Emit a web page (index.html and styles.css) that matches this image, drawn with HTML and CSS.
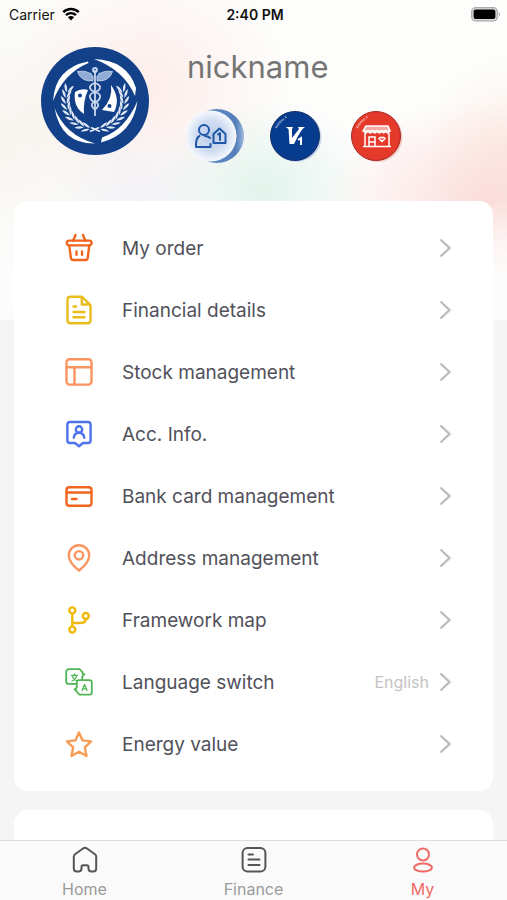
FILE: index.html
```html
<!DOCTYPE html>
<html lang="en">
<head>
  <meta charset="UTF-8">
  <meta name="viewport" content="width=device-width, initial-scale=1.0">
  <title>My</title>
  <link rel="stylesheet" href="styles.css">
</head>
<body>
  <div class="screen">
    <div class="content">
      <div class="status-bar">
        <div class="carrier">
          <span>Carrier</span>
          <svg class="wifi" viewBox="0 0 18 14">
            <path d="M1.2 5.2a11 11 0 0 1 15.6 0M4 8.2a7 7 0 0 1 10 0" fill="none" stroke="#000" stroke-width="2.4"/>
            <path d="M5.9 10.2a4.4 4.4 0 0 1 6.2 0L9 13.4z"/>
          </svg>
        </div>
        <span class="time">2:40 PM</span>
        <div class="power">
          <svg class="battery" viewBox="0 0 30 15">
            <rect x="0.7" y="0.7" width="25.6" height="13.2" rx="4" fill="#ddd" stroke="#aaa" stroke-width="1.3"/>
            <rect x="2.6" y="2.6" width="21.8" height="9.4" rx="2"/>
            <path d="M27.8 4.8q2.4 2.5 0 5z" fill="#aaa"/>
          </svg>
        </div>
      </div>

      <header class="profile">
        <svg class="avatar" viewBox="0 0 108 108">
          <defs>
            <g id="leaf">
              <path d="M55 81.500q-3-4-8.500-4.200q2.500 4.200 8.500 4.200zM55 82.500q-3 4-8.500 4.200q2.500-4.200 8.500-4.200z"/>
            </g>
            <g id="branch">
              <use href="#leaf" transform="rotate(12 54 53)"/>
              <use href="#leaf" transform="rotate(24 54 53)"/>
              <use href="#leaf" transform="rotate(36 54 53)"/>
              <use href="#leaf" transform="rotate(48 54 53)"/>
              <use href="#leaf" transform="rotate(60 54 53)"/>
              <use href="#leaf" transform="rotate(72 54 53)"/>
              <use href="#leaf" transform="rotate(84 54 53)"/>
              <use href="#leaf" transform="rotate(96 54 53)"/>
              <use href="#leaf" transform="rotate(107 54 53)"/>
              <path d="M59 84.500l-9-4" stroke="#e6edf8" stroke-width="1.6"/>
            </g>
          </defs>
          <circle cx="54" cy="54" r="54" fill="#134189"/>
          <g fill="#fff">
            <path d="M12 54Q14 21 47 14.500L47.500 16Q23 26 12 54z"/>
            <path d="M53 12Q86 13 95 41L94 49Q83 23 53 12z"/>
            <path d="M96.500 54Q92 87 60 95.500L61 90.500Q84 83 96.500 54z"/>
            <path d="M13.500 61Q24 88 54 96.500Q20 97 13.500 61z"/>
            <path d="M34 45Q40 41 47 43Q42 54 43 67Q32 60 34 45z"/>
            <path d="M70 38Q80 52 73 65L61 63Q72 52 70 38z"/>
          </g>
          <circle cx="39" cy="48.500" r="2" fill="#134189"/>
          <circle cx="68.500" cy="59" r="2" fill="#134189"/>
          <g fill="#dfe8f5">
            <use href="#branch"/>
            <use href="#branch" transform="translate(108 0) scale(-1 1)"/>
          </g>
          <g fill="none" stroke="#c9d8ee" stroke-width="1.800">
            <path d="M54 23V69"/>
            <circle cx="54" cy="23" r="2"/>
            <path d="M50 26q-4 5 2 8M58 26q4 5-2 8"/>
            <path d="M54 36q-6 2-5 5t6 4.500t4 5t-5 4.500t-3 4t4 4M54 36q6 2 5 5t-6 4.500t-4 5t5 4.500t3 4t-4 4"/>
          </g>
          <g fill="#8fabd6" stroke="#b9cbe6" stroke-width="1">
            <path d="M52 29Q47 23 36.500 24.500Q38 30 43 32.500Q48 35 52 33z"/>
            <path d="M56 29Q61 23 71.500 24.500Q70 30 65 32.500Q60 35 56 33z"/>
          </g>
        </svg>
        <div class="profile-info">
          <h1 class="nickname">nickname</h1>
          <div class="badges">
            <svg class="badge" viewBox="0 0 60 60">
              <defs>
                <radialGradient id="disc">
                  <stop offset="0" stop-color="#bccdea"/>
                  <stop offset="0.6" stop-color="#cfdcf1"/>
                  <stop offset="1" stop-color="#f6f9fd"/>
                </radialGradient>
                <linearGradient id="rim" x1="0" x2="1">
                  <stop offset="0.3" stop-color="#5f8cc6"/>
                  <stop offset="0.85" stop-color="#557fb9"/>
                  <stop offset="1" stop-color="#9db9de"/>
                </linearGradient>
              </defs>
              <circle cx="30" cy="30" r="27" fill="url(#rim)"/>
              <circle cx="24" cy="30" r="25.500" fill="url(#disc)"/>
              <g fill="none" stroke="#2058a8" stroke-width="2" stroke-linejoin="round" stroke-linecap="round">
                <circle cx="17" cy="24" r="5"/>
                <path d="M12.500 30Q8.500 32 9 41H23.500v-3M18 30q3 0 5 2"/>
                <path d="M26.500 28l6-5.500l6 5.500v9h-12zM31 28.500l2-1.500v7"/>
              </g>
            </svg>
            <svg class="badge" viewBox="0 0 60 60">
              <circle cx="28.500" cy="31" r="25" fill="#c7d3ea"/>
              <circle cx="27" cy="30" r="24.500" fill="#073b8e" stroke="#162f68"/>
              <path d="M8 22q3-6 8-9M17 11.500l1.500-.500" fill="none" stroke="#7d9ccb" stroke-width="2.200" stroke-dasharray="1.500 0.600"/>
              <path d="M17.500 21h7.500l-1 2v9l7-9-1-2h7q-4 2-11 17h-4.500l-1-15z" fill="#fff"/>
              <path d="M30 34l3-2v7" fill="none" stroke="#fff" stroke-width="2"/>
            </svg>
            <svg class="badge" viewBox="0 0 60 60">
              <circle cx="28.500" cy="31" r="25" fill="#f4cbc7"/>
              <circle cx="27" cy="30" r="24.500" fill="#e53a29" stroke="#9f2b26"/>
              <path d="M8 22q3-6 8-9M17 11.500l1.500-.500" fill="none" stroke="#f5a198" stroke-width="2.200" stroke-dasharray="1.500 0.600"/>
              <path d="M17 20h22l2 5q-2 3-4 0q-2 3-4.500 0q-2 3-4.500 0q-2 3-4.500 0q-2 3-4.500 0q-2 3-4.500 0z" fill="#f5aaa2"/>
              <g fill="none" stroke="#fff" stroke-width="1.500">
                <path d="M17 20h22l2 5H14zM15 25q2 4 4 0q2 4 4.500 0q2 4 4.500 0q2 4 4.500 0q2 4 4 0q2 4 4 0M16 27v13M40 27v13M14 40.500h28M20 40v-9h6v9M20 36h6"/>
                <path d="M33 35.500l-3-3q1-2 3-.5q2-1.500 3 .5z"/>
              </g>
            </svg>
          </div>
        </div>
      </header>

      <nav class="card menu" aria-label="Account">
        <a class="menu-item" href="#order">
          <svg class="menu-icon orange" viewBox="0 0 30 30">
            <path d="M11.500 2L9 8M19 2l2.500 6"/>
            <rect x="2.800" y="7.600" width="24.800" height="4.800" rx="2.400"/>
            <path d="M5.300 12.500l1.600 12.300q.3 2.200 2.500 2.200h11.800q2.200 0 2.500-2.200l1.600-12.300M12.500 18.500v3.300M18 18.500v3.300"/>
          </svg>
          <span class="menu-label">My order</span>
          <svg class="chevron" viewBox="0 0 12 20"><path d="M1.500 1.500l9 8.500l-9 8.500"/></svg>
        </a>
        <a class="menu-item" href="#financial">
          <svg class="menu-icon yellow" viewBox="0 0 30 30">
            <path d="M18 1.800H6.500Q3.500 1.800 3.500 4.800v20.400q0 3 3 3h17q3 0 3-3V10zM17.800 2v7.500h8M9.500 11.500H12M9.500 17h11M9.500 22.300h11"/>
          </svg>
          <span class="menu-label">Financial details</span>
          <svg class="chevron" viewBox="0 0 12 20"><path d="M1.500 1.500l9 8.500l-9 8.500"/></svg>
        </a>
        <a class="menu-item" href="#stock">
          <svg class="menu-icon peach" viewBox="0 0 30 30">
            <rect x="2.500" y="2.200" width="25" height="25.400" rx="3"/>
            <path d="M2.500 10.300h25M10.500 10.300v17"/>
          </svg>
          <span class="menu-label">Stock management</span>
          <svg class="chevron" viewBox="0 0 12 20"><path d="M1.500 1.500l9 8.500l-9 8.500"/></svg>
        </a>
        <a class="menu-item" href="#account">
          <svg class="menu-icon blue" viewBox="0 0 30 30">
            <path d="M6 3h18q2.600 0 2.600 2.600v15.800q0 2.600-2.600 2.600h-5l-4 3.200l-4-3.200H6q-2.600 0-2.600-2.600V5.600Q3.400 3 6 3z"/>
            <circle cx="15" cy="10.500" r="3.200"/>
            <path d="M9.800 18.700q.5-5 5.200-5t5.200 5"/>
          </svg>
          <span class="menu-label">Acc. Info.</span>
          <svg class="chevron" viewBox="0 0 12 20"><path d="M1.500 1.500l9 8.500l-9 8.500"/></svg>
        </a>
        <a class="menu-item" href="#bank-card">
          <svg class="menu-icon orange" viewBox="0 0 30 30">
            <rect x="2.500" y="6.200" width="25" height="18.600" rx="2.800"/>
            <path d="M2.500 11.500h25M8 18h4.500"/>
          </svg>
          <span class="menu-label">Bank card management</span>
          <svg class="chevron" viewBox="0 0 12 20"><path d="M1.500 1.500l9 8.500l-9 8.500"/></svg>
        </a>
        <a class="menu-item" href="#address">
          <svg class="menu-icon peach" viewBox="0 0 30 30">
            <path d="M15 27.500Q4.800 19.500 4.800 12.400a10.200 10.200 0 0 1 20.400 0Q25.200 19.500 15 27.500z"/>
            <circle cx="15" cy="12.300" r="4.200"/>
          </svg>
          <span class="menu-label">Address management</span>
          <svg class="chevron" viewBox="0 0 12 20"><path d="M1.500 1.500l9 8.500l-9 8.500"/></svg>
        </a>
        <a class="menu-item" href="#framework">
          <svg class="menu-icon gold" viewBox="0 0 30 30">
            <circle cx="8.300" cy="5.400" r="3"/>
            <circle cx="8.300" cy="24.600" r="3"/>
            <circle cx="21.800" cy="11" r="3"/>
            <path d="M8.300 8.500v13M8.300 18h8.500q5 0 5-4"/>
          </svg>
          <span class="menu-label">Framework map</span>
          <svg class="chevron" viewBox="0 0 12 20"><path d="M1.500 1.500l9 8.500l-9 8.500"/></svg>
        </a>
        <a class="menu-item" href="#language">
          <svg class="menu-icon green" viewBox="0 0 30 30">
            <path d="M13 16.800H4.500Q2.200 16.800 2.200 14.500V5Q2.200 2.200 5 2.200h10.500l3 3v1.600l2 .4l-2.300 2.400v3M18.200 13.200h7.300q2.300 0 2.300 2.300v9.700q0 2.400-2.300 2.400H15.500l-3-3v-1.300l-2-.6l2.300-2.200v-5q0-2.300 2.300-2.300z"/>
            <path class="thin" d="M7.500 8.500h6M10.500 7v1.500M8.500 10q1.500 3 4.500 4M12.500 10q-1.500 3-4.500 4M18 23.500l2.500-6l2.500 6M18.800 21.800h3.400"/>
          </svg>
          <span class="menu-label">Language switch</span>
          <span class="menu-value">English</span>
          <svg class="chevron" viewBox="0 0 12 20"><path d="M1.500 1.500l9 8.500l-9 8.500"/></svg>
        </a>
        <a class="menu-item" href="#energy">
          <svg class="menu-icon apricot" viewBox="0 0 30 30">
            <path d="M15 3.500l3.600 7.900l8.500 1l-6.300 5.900l1.700 8.700l-7.500-4.300l-7.500 4.300l1.700-8.700l-6.300-5.900l8.500-1z"/>
          </svg>
          <span class="menu-label">Energy value</span>
          <svg class="chevron" viewBox="0 0 12 20"><path d="M1.500 1.500l9 8.500l-9 8.500"/></svg>
        </a>
      </nav>

      <section class="card card-next"></section>
    </div>

    <nav class="tab-bar" aria-label="Main">
      <a class="tab" href="#home">
        <svg class="tab-icon" viewBox="0 0 28 28">
          <path d="M12 2.500L4 8.300Q2.800 9.300 2.800 10.800V22.500q0 3 3 3H7.500q3 0 3-3v-1.500q0-1.800 1.800-1.800h3.400q1.800 0 1.800 1.800V22.500q0 3 3 3h1.700q3 0 3-3V10.800Q25.200 9.300 24 8.300l-8-5.800q-2-1.400-4 0z"/>
        </svg>
        <span>Home</span>
      </a>
      <a class="tab" href="#finance">
        <svg class="tab-icon" viewBox="0 0 28 28">
          <rect x="2.600" y="2" width="22.800" height="23.400" rx="5"/>
          <path d="M8.500 8.400H13M8.500 13.600h11M8.500 18.900h11"/>
        </svg>
        <span>Finance</span>
      </a>
      <a class="tab active" href="#my">
        <svg class="tab-icon" viewBox="0 0 28 28">
          <ellipse cx="14" cy="8.500" rx="6" ry="6"/>
          <ellipse cx="14" cy="21.600" rx="9" ry="4"/>
        </svg>
        <span>My</span>
      </a>
    </nav>
  </div>
</body>
</html>
```

FILE: styles.css
```css
* {
  box-sizing: border-box;
}

body {
  margin: 0;
  font-family: Inter, "Liberation Sans", sans-serif;
  background: #f5f5f5;
}

a {
  color: inherit;
  text-decoration: none;
}

.screen {
  display: flex;
  flex-direction: column;
  height: 100vh;
}

.content {
  flex: 1;
  min-height: 0;
  display: flex;
  flex-direction: column;
  overflow: hidden;
  background:
    linear-gradient(to bottom, transparent 200px, rgba(253, 253, 253, 0.9) 290px, #fcfcfc 320px, #f5f5f5 320px),
    radial-gradient(ellipse 160px 100px at 96% 200px, rgba(251, 214, 212, 0.8), transparent),
    radial-gradient(ellipse 80px 90px at 100% 150px, rgba(250, 228, 218, 0.6), transparent),
    radial-gradient(ellipse 110px 90px at 52% 190px, rgba(219, 241, 232, 0.8), transparent),
    radial-gradient(ellipse 90px 80px at 28% 200px, rgba(238, 238, 246, 0.7), transparent),
    radial-gradient(ellipse 140px 130px at 29% 90px, rgba(252, 233, 230, 0.8), transparent),
    radial-gradient(ellipse 160px 160px at 0 140px, rgba(246, 244, 238, 0.9), transparent),
    #fdfdfc;
}

/* Status bar */
.status-bar {
  display: flex;
  align-items: center;
  height: 28px;
  padding: 0 6px 0 9px;
  font-size: 14px;
  color: #111;
}

.carrier,
.power {
  flex: 1;
  display: flex;
  align-items: center;
  gap: 7px;
}

.power {
  justify-content: flex-end;
}

.time {
  font-weight: 600;
}

.wifi {
  width: 18px;
  height: 14px;
}

.battery {
  width: 30px;
  height: 15px;
}

/* Profile */
.profile {
  display: flex;
  gap: 38px;
  padding: 19px 41px 35px;
}

.avatar {
  flex: none;
  width: 108px;
  height: 108px;
}

.nickname {
  margin: 0;
  font-size: 31px;
  line-height: 40px;
  font-weight: 400;
  color: #757575;
}

.badges {
  display: flex;
  gap: 21px;
  margin-top: 19px;
}

.badge {
  width: 60px;
  height: 60px;
}

/* Cards */
.card {
  margin: 0 14px;
  background: #fff;
  border-radius: 14px;
}

.menu {
  padding: 16px 0;
}

.card-next {
  flex: 1;
  margin-top: 19px;
  border-radius: 14px 14px 0 0;
}

.menu-item {
  display: flex;
  align-items: center;
  height: 62px;
  padding: 0 42px 0 50px;
}

.menu-icon {
  flex: none;
  width: 30px;
  height: 30px;
  margin-right: 28px;
  fill: none;
  stroke: currentColor;
  stroke-width: 2.4;
  stroke-linecap: round;
  stroke-linejoin: round;
}

.menu-label {
  flex: 1;
  font-size: 19px;
  color: #51515b;
}

.menu-value {
  margin-right: 10px;
  font-size: 16px;
  color: #c4c4c4;
}

.chevron {
  flex: none;
  width: 12px;
  height: 20px;
  fill: none;
  stroke: #bdbdbd;
  stroke-width: 2.4;
}

.orange {
  color: #f1651f;
}

.yellow {
  color: #e8bd1c;
}

.peach {
  color: #fb955f;
}

.apricot {
  color: #f79c55;
}

.blue {
  color: #4d72ea;
}

.gold {
  color: #f0b90b;
}

.green {
  color: #4fb555;
  stroke-width: 1.8;
}

.thin {
  stroke-width: 1.3;
}

/* Bottom tabs */
.tab-bar {
  display: flex;
  height: 60px;
  border-top: 1px solid #dedede;
  background: #fafafa;
}

.tab {
  flex: 1;
  display: flex;
  flex-direction: column;
  align-items: center;
  gap: 4px;
  padding-top: 5px;
  font-size: 16px;
  line-height: 22px;
  color: #9b9b9b;
}

.tab-icon {
  flex: none;
  width: 28px;
  height: 28px;
  fill: none;
  stroke: #555;
  stroke-width: 2;
  stroke-linecap: round;
  stroke-linejoin: round;
}

.active {
  color: #ee6a66;
}

.active .tab-icon {
  stroke: #ee6a66;
}
```
